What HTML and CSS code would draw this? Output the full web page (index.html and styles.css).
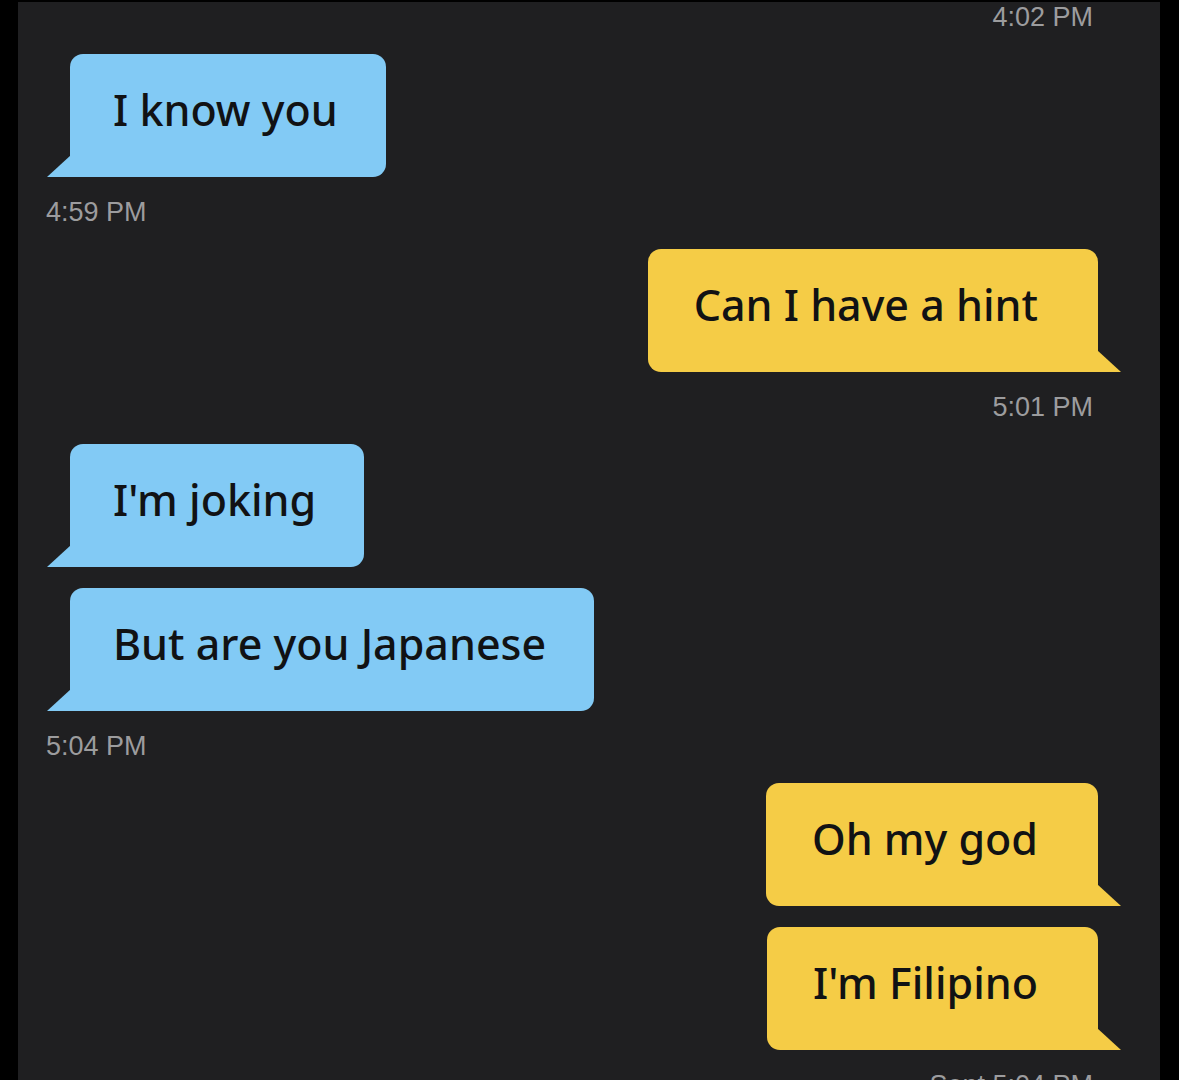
FILE: index.html
```html
<!DOCTYPE html>
<html lang="en">
  <head>
    <meta charset="UTF-8" />
    <meta name="viewport" content="width=device-width, initial-scale=1.0" />
    <title>Chat</title>
    <link rel="stylesheet" href="styles.css">
  </head>
  <body>
    <div class="chat">
      <div class="stamp out">4:02 PM</div>

      <div class="bubble in">I know you</div>
      <div class="stamp in">4:59 PM</div>

      <div class="bubble out">Can I have a hint</div>
      <div class="stamp out">5:01 PM</div>

      <div class="bubble in">I'm joking</div>
      <div class="bubble in">But are you Japanese</div>
      <div class="stamp in">5:04 PM</div>

      <div class="bubble out">Oh my god</div>
      <div class="bubble out">I'm Filipino</div>
      <div class="stamp out">Sent 5:04 PM</div>
    </div>
  </body>
</html>
```

FILE: styles.css
```css
html,
body {
  margin: 0;
  background: #000;
  height: 100%;
  overflow: hidden;
}
.chat {
  display: flex;
  flex-direction: column;
  width: 1142px;
  min-height: 1100px;
  margin: 2px 0 0 18px;
  background: #1f1f21;
}
.stamp {
  font-family: "Liberation Sans", Arial, sans-serif;
  font-size: 27px;
  line-height: 30px;
  color: #9c9c9e;
  margin-top: 20px;
}
.stamp:first-child {
  margin-top: 0;
}
.stamp.in {
  align-self: flex-start;
  margin-left: 28px;
}
.stamp.out {
  align-self: flex-end;
  margin-right: 67px;
}
.bubble {
  position: relative;
  font-family: "Noto Sans", sans-serif;
  font-size: 43px;
  font-weight: 500;
  line-height: 60px;
  color: #111214;
  padding: 26px 48px 37px 43px;
  border-radius: 13px;
  margin-top: 22px;
  white-space: nowrap;
}
.bubble + .bubble {
  margin-top: 21px;
}
.bubble.in {
  align-self: flex-start;
  margin-left: 52px;
  background: #82caf5;
  border-bottom-left-radius: 0;
}
.bubble.out {
  align-self: flex-end;
  margin-right: 62px;
  background: #f5cc46;
  border-bottom-right-radius: 0;
  padding: 26px 60px 37px 46px;
}
.bubble::after {
  content: "";
  position: absolute;
  bottom: 0;
  width: 24px;
  height: 22px;
  background: inherit;
}
.bubble.in::after {
  left: -23px;
  clip-path: polygon(100% 0, 100% 100%, 0 100%);
}
.bubble.out::after {
  right: -23px;
  clip-path: polygon(0 0, 100% 100%, 0 100%);
}
```
